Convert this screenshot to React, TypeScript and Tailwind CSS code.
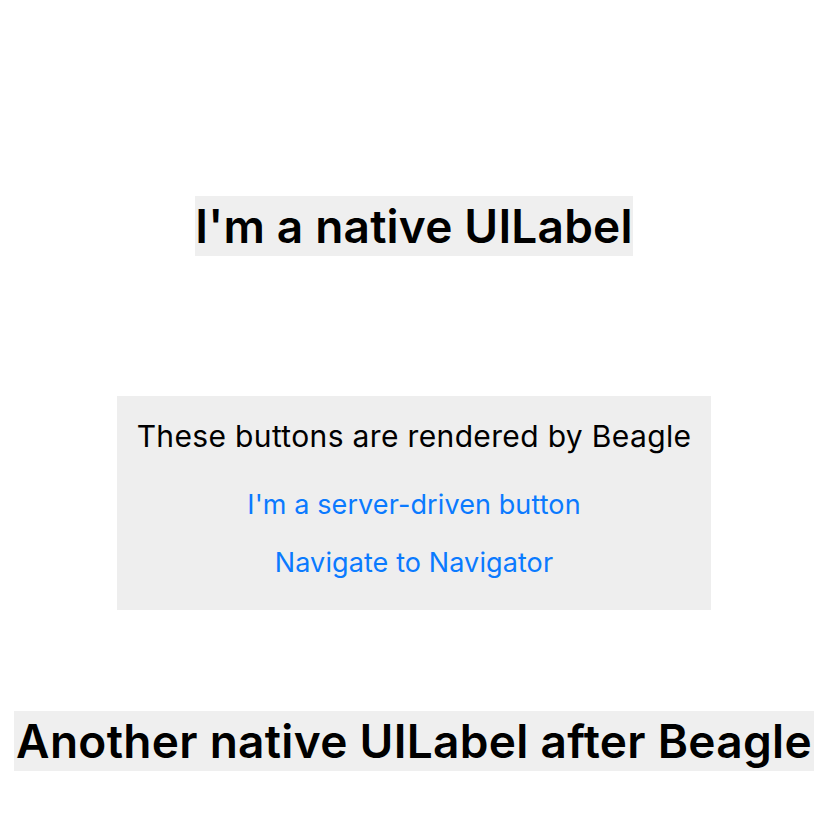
export default function App() {
  return (
    <div
      className="h-[828px] w-[828px] bg-white flex flex-col items-center"
      style={{ fontFamily: "Inter, 'Noto Sans', sans-serif" }}
    >
      <div className="mt-[196px] h-[60px] bg-[#efefef] flex items-center">
        <span className="text-[46px] font-semibold text-black leading-none tracking-[0.2px] whitespace-nowrap">
          I'm a native UILabel
        </span>
      </div>

      <div className="mt-[140px] h-[214px] w-[594px] bg-[#eeeeee] flex flex-col items-center">
        <p className="mt-[23px] h-[34px] flex items-center text-[30px] text-black leading-none tracking-[0.35px] whitespace-nowrap">
          These buttons are rendered by Beagle
        </p>
        <button className="mt-[34px] h-[34px] flex items-center text-[27px] text-[#0a7aff] leading-none tracking-[0.1px] whitespace-nowrap">
          I'm a server-driven button
        </button>
        <button className="mt-[24px] h-[34px] flex items-center text-[27px] text-[#0a7aff] leading-none tracking-[0.1px] whitespace-nowrap">
          Navigate to Navigator
        </button>
      </div>

      <div className="mt-[101px] h-[60px] w-[800px] bg-[#efefef] flex items-center justify-center overflow-hidden">
        <span className="text-[46px] font-semibold text-black leading-none tracking-[0.3px] whitespace-nowrap">
          Another native UILabel after Beagle
        </span>
      </div>
    </div>
  );
}
